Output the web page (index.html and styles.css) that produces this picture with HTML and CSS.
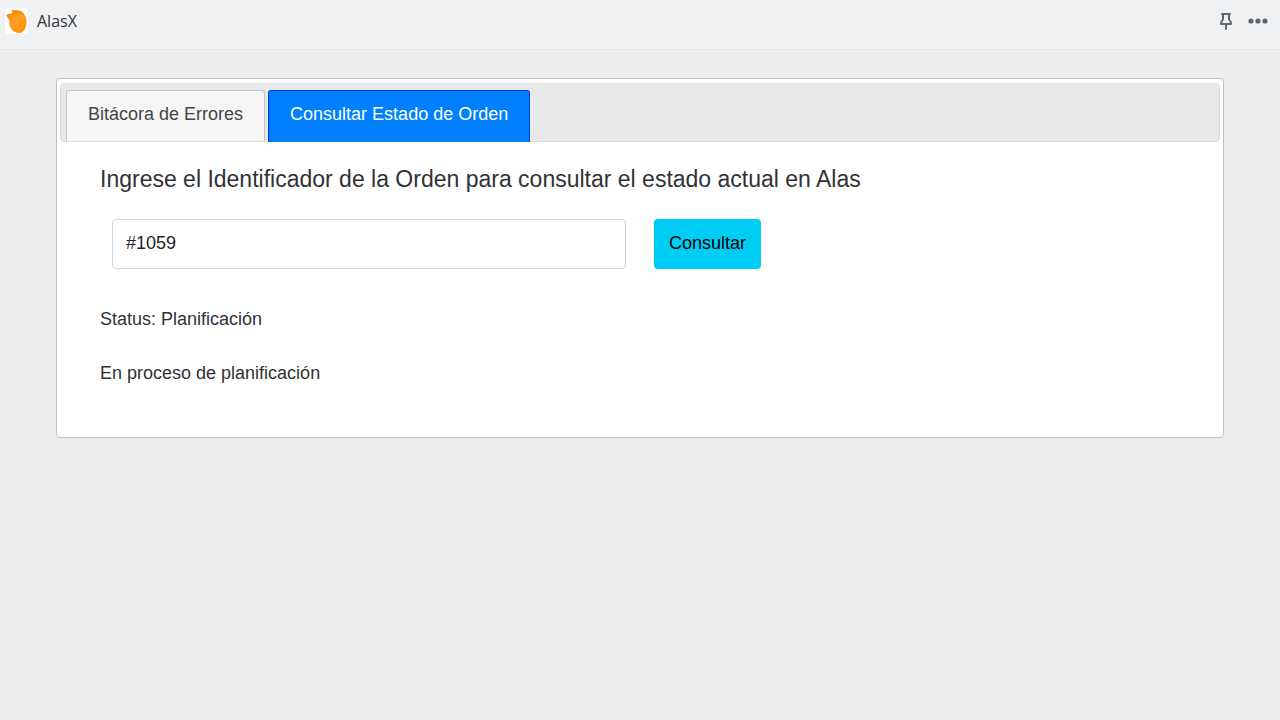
FILE: index.html
```html
<!DOCTYPE html>
<html lang="es">
<head>
<meta charset="utf-8">
<meta name="viewport" content="width=device-width, initial-scale=1">
<title>AlasX</title>
<link rel="stylesheet" href="styles.css">
</head>
<body>
<header class="topbar">
  <svg class="logo" viewBox="0 0 23 26" aria-hidden="true">
    <defs>
      <linearGradient id="wing" x1="0" y1="0" x2="1" y2="1">
        <stop offset="0" stop-color="#f5860b"/>
        <stop offset="0.500" stop-color="#ffa023"/>
        <stop offset="1" stop-color="#fb8c02"/>
      </linearGradient>
    </defs>
    <rect width="23" height="26" rx="4" fill="#fff"/>
    <path d="M1 7C3 6 5 5.500 7.500 5C7 4 6.500 3 6.500 1.500C8 2.500 10 2 12 2C15 2 18 3.500 19 6C21 8.500 21.500 11 21.500 14C21.500 20 18.500 25 14 25C9 25 5 21 4.500 16C4.500 14 4.500 12.500 3.500 11C2.500 9.500 2 9 1 7Z" fill="url(#wing)"/>
    <path d="M7.500 5C11 4.500 15 4 19 7" fill="none" stroke="#ee7d05" stroke-width="1"/>
  </svg>
  <span class="app-name">AlasX</span>
  <button class="icon-button" type="button" aria-label="Fijar">
    <svg width="14" height="20" viewBox="0 0 14 20" fill="none" stroke="#5c6770" stroke-width="2" stroke-linejoin="round" stroke-linecap="round" aria-hidden="true">
      <path d="M3 3H11M4 3V8.500C2.500 9.500 2 10.500 2 13H12C12 10.500 11.500 9.500 10 8.500V3M7 13V18"/>
    </svg>
  </button>
  <button class="icon-button" type="button" aria-label="Más acciones">
    <svg width="20" height="20" viewBox="0 0 20 20" fill="#5c6770" aria-hidden="true">
      <circle cx="3" cy="10" r="2.600"/><circle cx="10" cy="10" r="2.600"/><circle cx="17" cy="10" r="2.600"/>
    </svg>
  </button>
</header>
<main class="page">
  <section class="tabs">
    <div class="tab-list" role="tablist">
      <button class="tab" type="button" role="tab" id="tab-log" aria-selected="false">Bitácora de Errores</button>
      <button class="tab tab-active" type="button" role="tab" id="tab-order" aria-selected="true" aria-controls="panel-order">Consultar Estado de Orden</button>
    </div>
    <div class="panel" role="tabpanel" id="panel-order" aria-labelledby="tab-order">
      <form class="order-form">
        <label class="heading" for="order-id">Ingrese el Identificador de la Orden para consultar el estado actual en Alas</label>
        <div class="form-row">
          <input class="order-input" id="order-id" type="text" value="#1059">
          <button class="submit" type="button">Consultar</button>
        </div>
      </form>
      <p class="result">Status: Planificación</p>
      <p class="result">En proceso de planificación</p>
    </div>
  </section>
</main>
</body>
</html>
```
FILE: styles.css
```css
* {
  box-sizing: border-box;
}

body {
  margin: 0;
  min-height: 100vh;
  background: #ededed;
  color: #303236;
  font-family: "Liberation Sans", Arial, sans-serif;
  font-size: 18px;
}

button,
input {
  font: inherit;
}

.topbar {
  display: flex;
  align-items: center;
  height: 50px;
  padding: 0 12px 8px 5px;
  background: #f0f1f3;
  border-bottom: 1px solid #e4e5e7;
}

.logo {
  width: 23px;
  height: 26px;
}

.app-name {
  margin: 0 auto 0 9px;
  font-family: "Open Sans", sans-serif;
  font-size: 16px;
  line-height: 24px;
}

.icon-button {
  display: flex;
  margin-left: 15px;
  padding: 0;
  border: 0;
  background: none;
}

.page {
  padding: 28px 56px;
}

.tabs {
  padding: 4px 3px;
  background: #fff;
  border: 1px solid #c0c0c0;
  border-radius: 4px;
}

.tab-list {
  display: flex;
  gap: 3px;
  height: 59px;
  padding: 6px 5px 0;
  background: #e8e8e8;
  border: 1px solid #dddddd;
  border-radius: 4px;
}

.tab {
  padding: 0 21px 4px;
  background: #f6f6f6;
  border: 1px solid #c5c5c5;
  border-bottom: 0;
  border-radius: 3px 3px 0 0;
  color: #454545;
  white-space: nowrap;
}

.tab-active {
  margin-bottom: -1px;
  padding-bottom: 5px;
  background: #007fff;
  border-color: #003eff;
  color: #fff;
}

.panel {
  padding: 21px 40px 45px;
}

.heading {
  display: block;
  font-size: 23px;
  line-height: 32px;
}

.form-row {
  display: flex;
  gap: 28px;
  padding: 24px 12px 35px;
}

.order-input {
  flex: 0 1 514px;
  min-width: 0;
  height: 50px;
  padding: 0 13px 2px;
  background: #fff;
  border: 1px solid #ced4da;
  border-radius: 4px;
  color: #212529;
}

.submit {
  height: 50px;
  padding: 0 15px 2px;
  background: #00cdf4;
  border: 0;
  border-radius: 4px;
  color: #000;
}

.result {
  margin: 0 0 24px;
  line-height: 30px;
}

.result:last-child {
  margin-bottom: 0;
}
```
